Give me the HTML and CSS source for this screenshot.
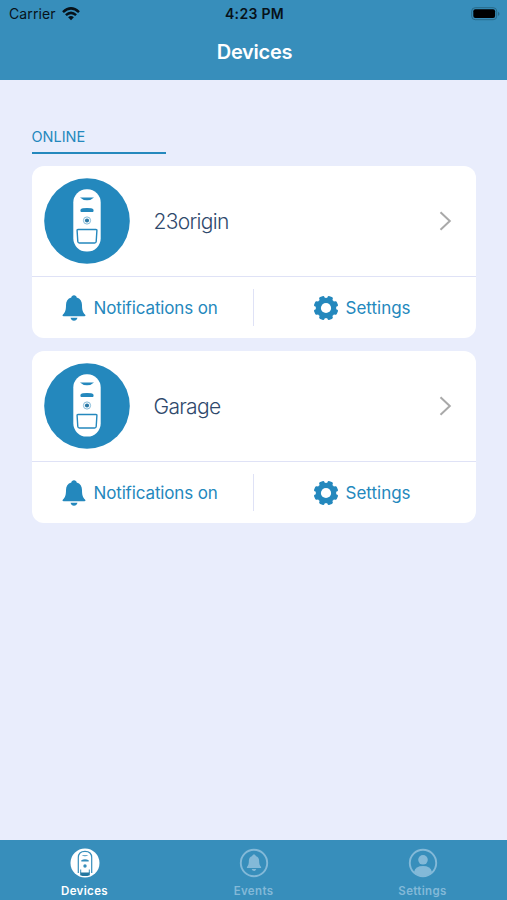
FILE: index.html
```html
<!DOCTYPE html>
<html lang="en">
<head>
<meta charset="utf-8">
<title>Devices</title>
<link rel="stylesheet" href="styles.css">
</head>
<body>
<svg class="symbols" width="0" height="0">
  <symbol id="device" viewBox="0 0 86 86">
    <circle cx="43" cy="43" r="42.8" fill="#2488bd"/>
    <rect x="29.3" y="11.3" width="27.4" height="62.2" rx="13.2" fill="#fff"/>
    <path d="M36 19.6h14q-2.500 2.700-7 2.700t-7-2.700z" fill="#2488bd"/>
    <path d="M36.800 34q-1.400-3 2-3.700 4.200-.8 8.400 0 3.400.7 2 3.700z" fill="#2488bd"/>
    <circle cx="43" cy="42.500" r="3.600" fill="none" stroke="#83bad8"/>
    <circle cx="43" cy="42.500" r="2.100" fill="#2b78a5"/>
    <path d="M34 51.500h18q1 0 .9 1l-.7 11q-.1 1.500-1.600 1.500H35.400q-1.500 0-1.600-1.500l-.7-11q-.1-1 .9-1z" fill="none" stroke="#2488bd" stroke-width="1.400"/>
  </symbol>
  <symbol id="bell" viewBox="0 0 24 26">
    <path d="M12 .3c1.500 0 2.500 1 2.700 2.100 3.600 1 5.300 4 5.300 7.600 0 5 .8 7.400 3 9.600.9.900.5 1.600-.6 1.600H1.600c-1.100 0-1.500-.7-.6-1.600 2.200-2.200 3-4.600 3-9.600 0-3.600 1.700-6.600 5.300-7.600C9.500 1.300 10.500.3 12 .3zM8.500 22.700h7c-.5 2-1.800 3-3.500 3s-3-1-3.500-3z" fill="currentColor"/>
  </symbol>
  <symbol id="gear" viewBox="0 0 24 24">
    <g fill="currentColor">
      <rect id="teeth" x="9.200" y="-.3" width="5.600" height="24.600" rx="1.600" transform="rotate(-22.500 12 12)"/>
      <use href="#teeth" transform="rotate(45 12 12)"/>
      <use href="#teeth" transform="rotate(90 12 12)"/>
      <use href="#teeth" transform="rotate(135 12 12)"/>
    </g>
    <circle cx="12" cy="12" r="7.600" fill="none" stroke="currentColor" stroke-width="5.400"/>
    <circle cx="12" cy="12" r="5.100" fill="#fff"/>
  </symbol>
</svg>

<header class="header">
  <div class="status">
    <div class="carrier"><span>Carrier</span>
      <svg width="18" height="14" viewBox="0 0 18 14"><g fill="none" stroke="#071219" stroke-width="2.500"><path d="M1 5.100Q9-2.300 17 5.100M3.900 8.200Q9 3.500 14.100 8.200"/></g><path d="M6.100 10.300Q9 7.800 11.900 10.300L9 13.300z" fill="#071219"/></svg>
    </div>
    <div class="clock">4:23 PM</div>
    <svg class="battery" width="29" height="14" viewBox="0 0 29 14"><rect x=".7" y=".7" width="25" height="12" rx="3.500" fill="none" stroke="#286988"/><rect x="2.300" y="2.300" width="21.800" height="8.800" rx="2" fill="#000"/><path d="M27 4.800q3 2.100 0 4.200z" fill="#286988"/></svg>
  </div>
  <h1 class="title">Devices</h1>
</header>

<main class="content">
  <h2 class="section">ONLINE</h2>
  <article class="card">
    <div class="device-row">
      <svg class="avatar"><use href="#device"/></svg>
      <span class="name">23origin</span>
      <svg class="chevron" viewBox="0 0 13 20"><path d="M1.500 1.200L10.800 10l-9.300 8.800" fill="none" stroke="#a9a9a9" stroke-width="2"/></svg>
    </div>
    <div class="actions">
      <div class="action"><svg class="bell"><use href="#bell"/></svg><span class="notify">Notifications on</span></div>
      <div class="divider"></div>
      <div class="action"><svg class="gear"><use href="#gear"/></svg><span class="prefs">Settings</span></div>
    </div>
  </article>
  <article class="card">
    <div class="device-row">
      <svg class="avatar"><use href="#device"/></svg>
      <span class="name">Garage</span>
      <svg class="chevron" viewBox="0 0 13 20"><path d="M1.500 1.200L10.800 10l-9.300 8.800" fill="none" stroke="#a9a9a9" stroke-width="2"/></svg>
    </div>
    <div class="actions">
      <div class="action"><svg class="bell"><use href="#bell"/></svg><span class="notify">Notifications on</span></div>
      <div class="divider"></div>
      <div class="action"><svg class="gear"><use href="#gear"/></svg><span class="prefs">Settings</span></div>
    </div>
  </article>
</main>

<nav class="tabs">
  <div class="tab active">
    <svg viewBox="0 0 30 30"><circle cx="15" cy="15" r="14.500" fill="#fff"/><path d="M8.300 25V9.500Q8.300 3.300 15 3.300t6.700 6.200V25" fill="none" stroke="#378ebb" stroke-width="1.200"/><path d="M11.600 7.200h6.800q-3.400 2.200-6.800 0zM11.300 12.200q3.700-1.800 7.400 0v1.300h-7.400z" fill="#378ebb"/><circle cx="15" cy="18" r="1.700" fill="#378ebb"/><path d="M10.700 21.500V25M19.300 21.500V25" stroke="#378ebb"/><path d="M10.200 24.500h9.600v2.700q-4.800 1.800-9.600 0z" fill="#26779f"/></svg>
    <span>Devices</span>
  </div>
  <div class="tab">
    <svg viewBox="0 0 30 30"><circle cx="15" cy="15" r="13.200" fill="none" stroke="currentColor" stroke-width="1.900"/><svg x="7.300" y="6" width="15.400" height="17.500"><use href="#bell"/></svg></svg>
    <span>Events</span>
  </div>
  <div class="tab">
    <svg viewBox="0 0 30 30"><circle cx="15" cy="15" r="13.200" fill="none" stroke="currentColor" stroke-width="1.900"/><circle cx="15" cy="11.800" r="4.800" fill="currentColor"/><path d="M6 24q1.500-5.900 9-5.900t9 5.900q-4 4-9 4t-9-4z" fill="currentColor"/></svg>
    <span>Settings</span>
  </div>
</nav>
</body>
</html>
```
FILE: styles.css
```css
* { box-sizing: border-box; }
body {
  margin: 0;
  height: 900px;
  display: flex;
  flex-direction: column;
  overflow: hidden;
  background: #e9edfc;
  color: #2488bd;
  font-family: Inter, "Liberation Sans", sans-serif;
}
svg { display: block; flex-shrink: 0; }
.symbols { position: absolute; }
.header { height: 79.500px; background: #378ebb; }
.status {
  height: 27px;
  padding: 0 7px 0 9px;
  display: grid;
  grid-template-columns: 1fr auto 1fr;
  align-items: center;
  color: #071219;
  font-size: 14px;
  line-height: 27px;
}
.carrier { display: flex; align-items: center; gap: 6px; letter-spacing: .1px; }
.clock { font-weight: 600; letter-spacing: .3px; }
.battery { justify-self: end; }
.title {
  margin: 0;
  padding-left: 2px;
  color: #fff;
  font-size: 20px;
  font-weight: 600;
  line-height: 51px;
  letter-spacing: -.25px;
  text-align: center;
}
.content { flex: 1; padding: 45.500px 31px 0 31.500px; }
.section {
  width: 134.500px;
  height: 29px;
  margin: 0 0 12px;
  border-bottom: 2px solid #2488bd;
  font-size: 14.500px;
  font-weight: 400;
  line-height: 24px;
}
.card {
  height: 172px;
  margin-bottom: 12.500px;
  border-radius: 12px;
  background: #fff;
}
.device-row {
  height: 111px;
  display: flex;
  align-items: center;
  padding: 0 24px 0 12px;
  border-bottom: 1px solid #dfe2f6;
}
.avatar { width: 86px; height: 86px; }
.name {
  flex: 1;
  margin-left: 24px;
  padding-top: 1px;
  color: #2f496c;
  font-size: 21px;
  font-weight: 300;
  letter-spacing: -.7px;
}
.chevron { width: 13px; height: 20px; }
.actions {
  height: 61px;
  display: grid;
  grid-template-columns: 221px 1px 1fr;
  align-items: center;
}
.action {
  display: flex;
  align-items: center;
  padding: 1px 0 0 30px;
  font-size: 17px;
  letter-spacing: -.14px;
}
.divider { width: 1px; height: 37px; background: #dfe2f6; }
.divider + .action { padding-left: 60px; letter-spacing: 0; }
.bell { width: 24px; height: 26px; margin-right: 8px; }
.gear { width: 24px; height: 24px; margin-right: 8px; }
.tabs { height: 60px; display: flex; background: #378ebb; }
.tab {
  flex: 1;
  display: flex;
  flex-direction: column;
  align-items: center;
  padding-top: 8px;
  color: #83b9d8;
  font-size: 11.500px;
  font-weight: 600;
  letter-spacing: .35px;
}
.tab svg { width: 30px; height: 30px; }
.tab svg svg { width: 15.400px; height: 17.500px; }
.tab span { line-height: 16px; margin-top: 5px; }
.active { color: #fff; }
```
